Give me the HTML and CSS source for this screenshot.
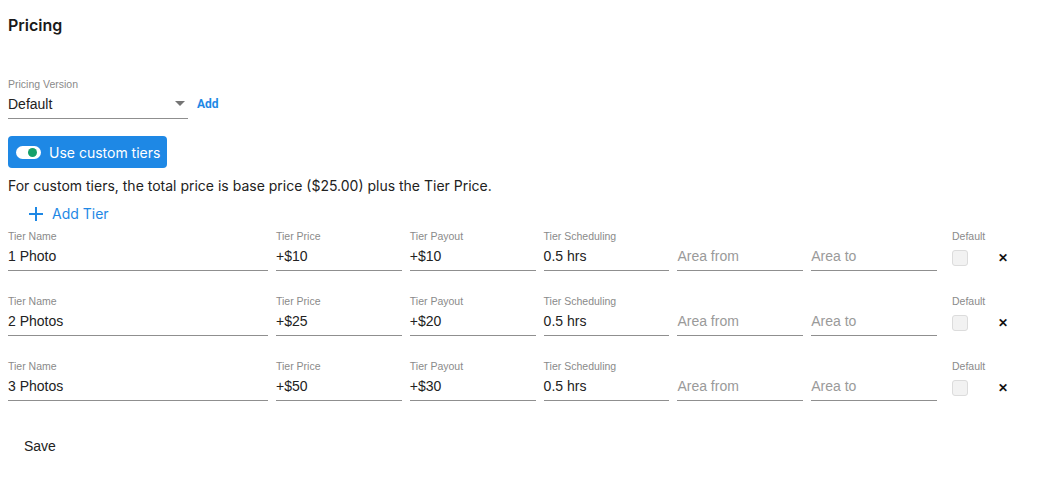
FILE: index.html
```html
<!DOCTYPE html>
<html>
<head>
<meta charset="utf-8">
<link rel="stylesheet" href="styles.css">
</head>
<body>
<div class="page">
  <h1 class="title">Pricing</h1>
  <div class="version">
    <div class="select">
      <div class="label">Pricing Version</div>
      <div class="select-box">
        <span class="value">Default</span>
        <svg class="caret" width="10" height="5" viewBox="0 0 10 5"><path d="M0 0h10L5 5z" fill="#757575"/></svg>
      </div>
    </div>
    <span class="add-link">Add</span>
  </div>
  <button class="toggle-btn">
    <span class="track"><span class="knob"></span></span>
    <span>Use custom tiers</span>
  </button>
  <p class="desc">For custom tiers, the total price is base price ($25.00) plus the Tier Price.</p>
  <div class="add-tier">
    <svg width="14" height="14" viewBox="0 0 14 14"><path d="M7 0v14M0 7h14" stroke="#1e88e5" stroke-width="2"/></svg>
    <span>Add Tier</span>
  </div>
  <div class="tiers">
    <div class="tier">
      <div class="field w-name"><div class="label">Tier Name</div><div class="input">1 Photo</div></div>
      <div class="field"><div class="label">Tier Price</div><div class="input">+$10</div></div>
      <div class="field"><div class="label">Tier Payout</div><div class="input">+$10</div></div>
      <div class="field"><div class="label">Tier Scheduling</div><div class="input">0.5 hrs</div></div>
      <div class="field"><div class="label">&nbsp;</div><div class="input ph">Area from</div></div>
      <div class="field"><div class="label">&nbsp;</div><div class="input ph">Area to</div></div>
      <div class="default"><div class="label">Default</div><span class="check"></span></div>
      <span class="remove">✕</span>
    </div>
    <div class="tier">
      <div class="field w-name"><div class="label">Tier Name</div><div class="input">2 Photos</div></div>
      <div class="field"><div class="label">Tier Price</div><div class="input">+$25</div></div>
      <div class="field"><div class="label">Tier Payout</div><div class="input">+$20</div></div>
      <div class="field"><div class="label">Tier Scheduling</div><div class="input">0.5 hrs</div></div>
      <div class="field"><div class="label">&nbsp;</div><div class="input ph">Area from</div></div>
      <div class="field"><div class="label">&nbsp;</div><div class="input ph">Area to</div></div>
      <div class="default"><div class="label">Default</div><span class="check"></span></div>
      <span class="remove">✕</span>
    </div>
    <div class="tier">
      <div class="field w-name"><div class="label">Tier Name</div><div class="input">3 Photos</div></div>
      <div class="field"><div class="label">Tier Price</div><div class="input">+$50</div></div>
      <div class="field"><div class="label">Tier Payout</div><div class="input">+$30</div></div>
      <div class="field"><div class="label">Tier Scheduling</div><div class="input">0.5 hrs</div></div>
      <div class="field"><div class="label">&nbsp;</div><div class="input ph">Area from</div></div>
      <div class="field"><div class="label">&nbsp;</div><div class="input ph">Area to</div></div>
      <div class="default"><div class="label">Default</div><span class="check"></span></div>
      <span class="remove">✕</span>
    </div>
  </div>
  <div class="save">Save</div>
</div>
</body>
</html>
```
FILE: styles.css
```css
* { box-sizing: border-box; }
body {
  margin: 0;
  background: #fff;
  font-family: "Liberation Sans", Arial, sans-serif;
  color: #212121;
}
.page { padding: 0 8px; }
.title {
  margin: 0;
  padding-top: 15px;
  font-family: Inter, sans-serif;
  font-size: 16px;
  font-weight: 600;
  line-height: 20px;
  color: #1a1a1a;
}
.version {
  display: flex;
  align-items: flex-end;
  margin-top: 43px;
}
.select { width: 180px; }
.label {
  font-size: 10.5px;
  line-height: 12px;
  color: #8a8a8a;
  white-space: nowrap;
}
.select-box {
  display: flex;
  align-items: center;
  justify-content: space-between;
  height: 29px;
  padding-bottom: 1px;
  border-bottom: 1px solid #8f8f8f;
  padding-right: 3px;
}
.select-box .value { font-size: 14px; color: #222; }
.caret { margin-top: 0; }
.add-link {
  margin-left: 9px;
  margin-bottom: 8px;
  font-family: Roboto, sans-serif;
  font-weight: 700;
  font-size: 12px;
  color: #1e88e5;
}
.toggle-btn {
  display: flex;
  align-items: center;
  gap: 8px;
  margin-top: 17px;
  height: 32px;
  padding: 0 7px 0 8px;
  border: none;
  border-radius: 4px;
  background: #1e88e5;
  color: #fff;
  font-family: Inter, sans-serif;
  font-size: 14px;
  font-weight: 400;
  white-space: nowrap;
}
.track {
  position: relative;
  display: block;
  width: 25px;
  height: 13px;
  border-radius: 7px;
  background: #fff;
}
.knob {
  position: absolute;
  top: 2px;
  right: 4px;
  width: 9px;
  height: 9px;
  border-radius: 50%;
  background: #17a06a;
}
.desc {
  margin: 9px 0 0;
  font-family: Inter, sans-serif;
  font-size: 14px;
  line-height: 18px;
  color: #222;
}
.add-tier {
  display: flex;
  align-items: center;
  gap: 9px;
  margin: 10px 0 0 21px;
  font-family: Inter, sans-serif;
  font-size: 14px;
  color: #1e88e5;
  line-height: 18px;
}
.tiers { margin-top: 7px; }
.tier {
  display: flex;
  align-items: flex-start;
  gap: 8px;
  height: 65px;
}
.field { width: 125.8px; }
.field.w-name { width: 260px; }
.input {
  height: 29px;
  padding-top: 7px;
  font-size: 14px;
  line-height: 14px;
  color: #222;
  border-bottom: 1px solid #8f8f8f;
}
.input.ph { color: #9a9a9a; }
.default { margin-left: 7px; width: 40px; }
.check {
  display: block;
  margin-top: 8px;
  width: 16px;
  height: 16px;
  border: 1px solid #dcdcdc;
  border-radius: 3px;
  background: #f2f2f2;
}
.remove {
  margin: 21px 0 0 -2px;
  font-size: 12px;
  font-weight: 700;
  color: #111;
}
.save {
  margin: 13px 0 0 16px;
  font-size: 14px;
  color: #222;
}
```
